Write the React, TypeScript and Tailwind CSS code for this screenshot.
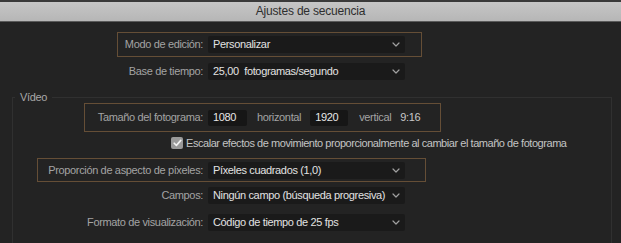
import React from "react";

const Chevron = () => (
  <svg width="8" height="5" viewBox="0 0 8 5" className="shrink-0">
    <polyline points="1,1 4,4 7,1" fill="none" stroke="#a0a0a0" strokeWidth="1.2" strokeLinecap="round" strokeLinejoin="round" />
  </svg>
);

const Dropdown = ({ value }: { value: string }) => (
  <div className="flex items-center justify-between w-[197px] h-[17px] bg-[#1a1a1a] rounded-[2px] pl-[5px] pr-[5px] text-[#e2e2e2]">
    <span className="whitespace-pre">{value}</span>
    <Chevron />
  </div>
);

export default function App() {
  return (
    <div
      className="w-[621px] h-[243px] overflow-hidden bg-[#232323] text-[11px] leading-[13px] tracking-[-0.35px]"
      style={{ fontFamily: '"Liberation Sans", Arial, sans-serif' }}
    >
      <div className="h-[2px] bg-[#3a3a3a]" />
      <div className="h-[19px] bg-gradient-to-b from-[#c6c6c6] to-[#b6b6b6] flex items-center justify-center text-[12px] text-[#2e2e2e] tracking-[-0.2px]">
        Ajustes de secuencia
      </div>
      <div className="h-[1px] bg-[#5a5a5a]" />

      {/* Modo de edición */}
      <div className="mt-[10px] ml-[117px] w-[305px] h-[25px] border border-[#654e36] flex items-center">
        <div className="w-[85px] text-right text-[#a3a3a3] whitespace-nowrap">Modo de edición:</div>
        <div className="ml-[5px]">
          <Dropdown value="Personalizar" />
        </div>
      </div>

      {/* Base de tiempo */}
      <div className="mt-[6px] flex items-center">
        <div className="w-[203px] text-right text-[#a3a3a3] whitespace-nowrap">Base de tiempo:</div>
        <div className="ml-[5px]">
          <Dropdown value="25,00  fotogramas/segundo" />
        </div>
      </div>

      {/* Vídeo group */}
      <fieldset className="mt-[11px] ml-[12px] w-[600px] h-[200px] border border-[#303030]">
        <legend className="ml-[2px] px-[5px] leading-[12px] text-[#a8a8a8]">Vídeo</legend>

        {/* Tamaño del fotograma */}
        <div className="ml-[71px] w-[357px] h-[29px] border border-[#654e36] flex items-center text-[#a3a3a3]">
          <div className="w-[118px] text-right whitespace-nowrap">Tamaño del fotograma:</div>
          <div className="ml-[5px] w-[39px] h-[16px] bg-[#161616] rounded-[2px] pl-[5px] flex items-center text-[#e6e6e6]">1080</div>
          <div className="ml-[10px] whitespace-nowrap">horizontal</div>
          <div className="ml-[9px] w-[38px] h-[16px] bg-[#161616] rounded-[2px] pl-[5px] flex items-center text-[#e6e6e6]">1920</div>
          <div className="ml-[11px] whitespace-nowrap">vertical</div>
          <div className="ml-[9px] text-[#c8c8c8]">9:16</div>
        </div>

        {/* Checkbox */}
        <div className="mt-[5px] ml-[158px] flex items-center h-[12px]">
          <div className="w-[12px] h-[12px] rounded-[2px] bg-[#9a9a9a] flex items-center justify-center">
            <svg width="9" height="8" viewBox="0 0 9 8">
              <polyline points="1.2,4.2 3.4,6.4 7.8,1.4" fill="none" stroke="#f2f2f2" strokeWidth="1.6" strokeLinecap="round" strokeLinejoin="round" />
            </svg>
          </div>
          <div className="ml-[3px] text-[#c4c4c4] whitespace-nowrap tracking-[-0.45px]">
            Escalar efectos de movimiento proporcionalmente al cambiar el tamaño de fotograma
          </div>
        </div>

        {/* Proporción de aspecto */}
        <div className="mt-[9px] ml-[24px] w-[389px] h-[24px] border border-[#654e36] flex items-center">
          <div className="w-[165px] text-right text-[#a3a3a3] whitespace-nowrap">Proporción de aspecto de píxeles:</div>
          <div className="ml-[5px]">
            <Dropdown value="Píxeles cuadrados (1,0)" />
          </div>
        </div>

        {/* Campos */}
        <div className="mt-[5px] flex items-center">
          <div className="w-[190px] text-right text-[#a3a3a3] whitespace-nowrap">Campos:</div>
          <div className="ml-[5px]">
            <Dropdown value="Ningún campo (búsqueda progresiva)" />
          </div>
        </div>

        {/* Formato de visualización */}
        <div className="mt-[10px] flex items-center">
          <div className="w-[190px] text-right text-[#a3a3a3] whitespace-nowrap">Formato de visualización:</div>
          <div className="ml-[5px]">
            <Dropdown value="Código de tiempo de 25 fps" />
          </div>
        </div>
      </fieldset>
    </div>
  );
}
